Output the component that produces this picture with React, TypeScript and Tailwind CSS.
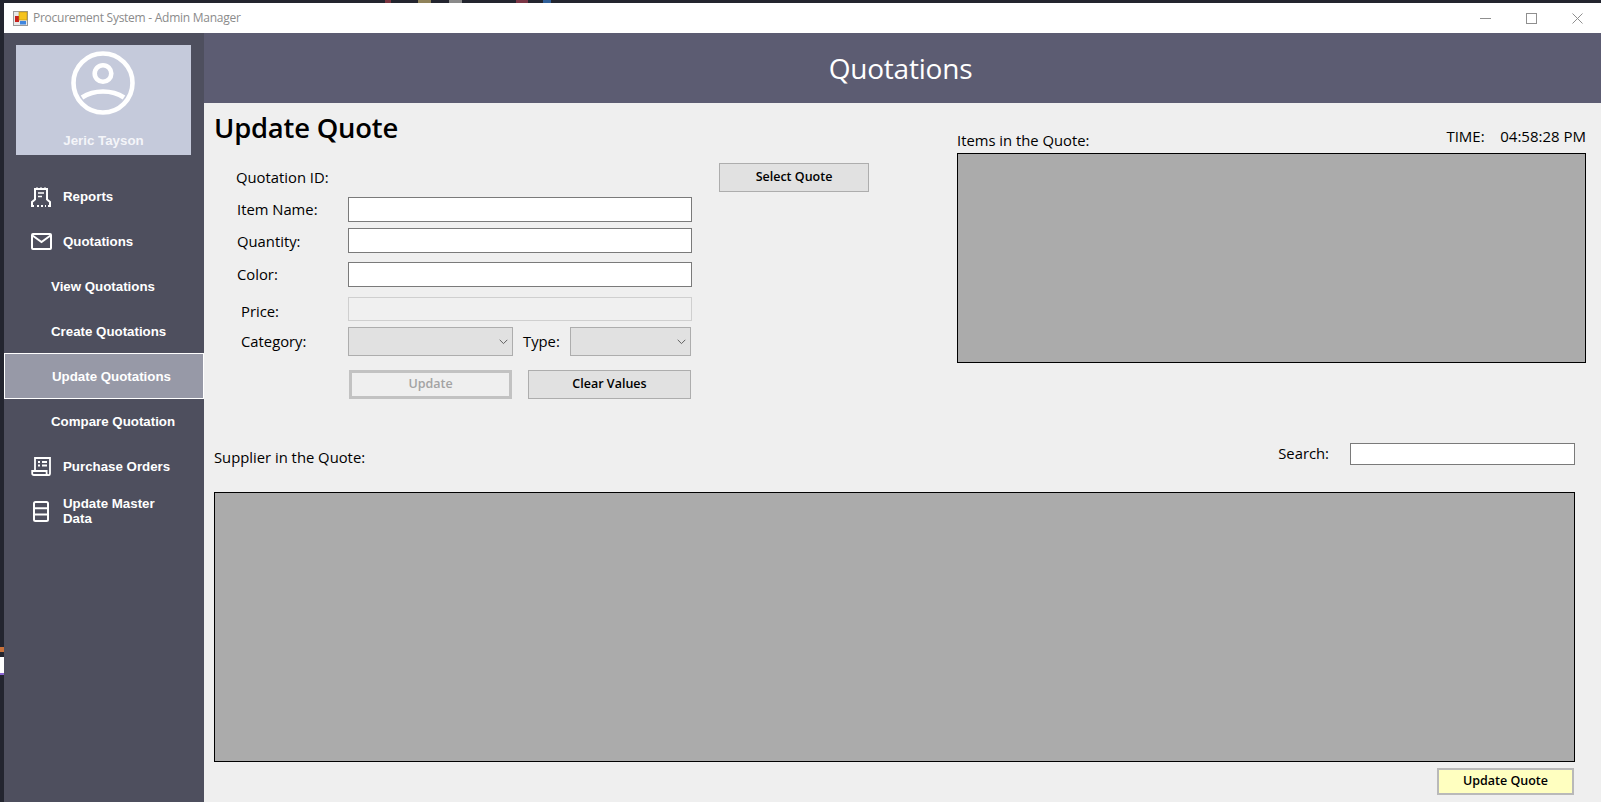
import React from 'react';

const uiFont = "[font-family:'Open_Sans',sans-serif]";

const ReportsIcon = () => (
    <svg width="22" height="20" viewBox="0 0 22 20" fill="none" stroke="#fff" strokeWidth="2">
        <path d="M5 13V2h12v11" />
        <path d="M6 1h2M10 1h2M14 1h2" strokeWidth="1.2" />
        <path d="M8 6h6M8 9.5h4" strokeWidth="1.7" />
        <path d="M5 12.5 2 15v4h2M17 12.5l3 2.5v4h-2" />
        <path d="M7 19h2M11 19h2M15 19h1" />
    </svg>
);

const MailIcon = () => (
    <svg width="21" height="17" viewBox="0 0 21 17" fill="none" stroke="#fff" strokeWidth="2">
        <rect x="1" y="1" width="19" height="15" rx="1" />
        <path d="M1.5 2.5 10.5 9l9-6.5" />
    </svg>
);

const OrdersIcon = () => (
    <svg width="20" height="19" viewBox="0 0 20 19" fill="none" stroke="#fff" strokeWidth="1.8">
        <path d="M4 14V1h15v15.5a1.7 1.7 0 0 1-3.4 0V14H1.2v2.2A1.8 1.8 0 0 0 3 18h13" />
        <path d="M7 5h2M11 5h5M7 8.5h2M11 8.5h5" />
    </svg>
);

const DataIcon = () => (
    <svg width="16" height="21" viewBox="0 0 16 21" fill="none" stroke="#fff" strokeWidth="2">
        <rect x="1" y="1" width="14" height="19" rx="1.5" />
        <path d="M1 7.3h14M1 13.6h14" />
    </svg>
);

const Chevron = () => (
    <svg width="9" height="6" viewBox="0 0 9 6" fill="none" stroke="#606060" strokeWidth="1">
        <path d="M.7.8 4.5 4.6 8.3.8" />
    </svg>
);

const NavItem: React.FC<{ icon?: React.ReactNode; active?: boolean; children: React.ReactNode }> = ({ icon, active, children }) => {
    if (active) {
        return (
            <div className="-mt-px h-[46px] flex items-center pl-[47px] bg-[#9799a7] border border-white text-[13.3px] font-bold text-white leading-[15px]">
                {children}
            </div>
        );
    }
    return (
        <div className={`h-[45px] flex items-center text-[13.3px] font-bold text-white leading-[15px] ${icon ? 'pl-[24px]' : 'pl-[47px]'}`}>
            {icon && <div className="w-[31px] flex justify-center pr-[5px]">{icon}</div>}
            <span className={icon ? 'pl-[4px]' : ''}>{children}</span>
        </div>
    );
};

const TextBox: React.FC<{ className?: string; disabled?: boolean }> = ({ className, disabled }) => (
    <input
        disabled={disabled}
        className={`block h-[25px] bg-white border border-[#7a7a7a] outline-none ${className ?? ''}`}
    />
);

const ComboBox: React.FC<{ className?: string }> = ({ className }) => (
    <div className={`h-[29px] bg-[#e1e1e1] border border-[#adadad] flex items-center justify-end pr-[4px] ${className ?? ''}`}>
        <Chevron />
    </div>
);

const Button: React.FC<{ className?: string; children: React.ReactNode }> = ({ className, children }) => (
    <button className={`block h-[29px] bg-[#e1e1e1] border border-[#adadad] text-[12.5px] font-semibold text-black ${uiFont} ${className ?? ''}`}>
        {children}
    </button>
);

export default function App() {
    return (
        <div className="w-screen h-screen overflow-hidden bg-[#23252f] flex font-['Liberation_Sans',sans-serif]">
            <div className="w-[4px] shrink-0 flex flex-col pt-[647px]">
                <div className="h-[5px] bg-[#c8713a]" />
                <div className="h-[5px]" />
                <div className="h-[16px] bg-white" />
                <div className="h-[2px] bg-[#8a63d2]" />
            </div>
            <div className="flex-1 min-w-0 flex flex-col">
                {/* bits of the desktop behind the window */}
                <div className="h-[3px] shrink-0 flex pl-[381px]">
                    <div className="w-[6px] bg-[#7a3540]" />
                    <div className="w-[27px]" />
                    <div className="w-[13px] bg-[#8f825a]" />
                    <div className="w-[18px]" />
                    <div className="w-[13px] bg-[#8a8a8a]" />
                    <div className="w-[54px]" />
                    <div className="w-[12px] bg-[#7a3545]" />
                    <div className="w-[15px]" />
                    <div className="w-[8px] bg-[#2f5f98]" />
                </div>
                {/* title bar */}
                <div className="h-[30px] shrink-0 bg-white flex items-center">
                    <svg className="ml-[9px]" width="15" height="15" viewBox="0 0 15 15">
                        <rect x="0.5" y="0.5" width="14" height="14" fill="#e8e8e8" stroke="#9a9a9a" />
                        <rect x="2" y="5" width="4" height="6" fill="#c8201c" />
                        <rect x="6" y="1" width="8" height="8" fill="#f5c31d" stroke="#b98c10" strokeWidth="0.6" />
                        <rect x="7" y="10" width="6" height="3.5" fill="#3f86e0" />
                    </svg>
                    <span className={`ml-[5px] text-[12px] text-[#8b8b8b] ${uiFont} tracking-[-0.26px]`}>
                        Procurement System - Admin Manager
                    </span>
                    <div className="ml-auto flex items-center pr-[18px] gap-[35px]">
                        <svg width="11" height="11" viewBox="0 0 11 11" stroke="#8f8f8f"><path d="M0 5.5h11" /></svg>
                        <svg width="11" height="11" viewBox="0 0 11 11" fill="none" stroke="#8f8f8f"><rect x="0.5" y="0.5" width="10" height="10" /></svg>
                        <svg width="11" height="11" viewBox="0 0 11 11" stroke="#8f8f8f"><path d="M.5.5l10 10M10.5.5l-10 10" /></svg>
                    </div>
                </div>

                <div className="flex-1 min-h-0 flex">
                    {/* sidebar */}
                    <aside className="w-[200px] shrink-0 bg-[#4e4f5e] flex flex-col">
                        <div className="mt-[12px] ml-[12px] w-[175px] h-[110px] bg-[#c5cadb] flex flex-col items-center pt-[5px] pr-[2px]">
                            <svg width="66" height="66" viewBox="0 0 66 66" fill="none" stroke="#fff" strokeWidth="4.6">
                                <circle cx="33" cy="33" r="29.5" />
                                <circle cx="33" cy="23.5" r="8.3" />
                                <path d="M12 47.5C18 43.5 25 41.5 33 41.5s15 2 21 6" />
                            </svg>
                            <span className="mt-[17px] pl-[2px] text-[13.3px] font-bold text-[#f4f5f9] leading-[15px]">Jeric Tayson</span>
                        </div>
                        <nav className="mt-[19px] flex flex-col">
                            <NavItem icon={<ReportsIcon />}>Reports</NavItem>
                            <NavItem icon={<MailIcon />}>Quotations</NavItem>
                            <NavItem>View Quotations</NavItem>
                            <NavItem>Create Quotations</NavItem>
                            <NavItem active>Update Quotations</NavItem>
                            <NavItem>Compare Quotation</NavItem>
                            <NavItem icon={<OrdersIcon />}>Purchase Orders</NavItem>
                            <NavItem icon={<DataIcon />}>
                                <span className="block w-[110px] pb-[2px]">Update Master Data</span>
                            </NavItem>
                        </nav>
                    </aside>

                    <div className={`flex-1 min-w-0 flex flex-col bg-[#efefef] text-black ${uiFont}`}>
                        <header className="h-[70px] shrink-0 bg-[#5c5c72] flex items-center justify-center text-white text-[28px] font-medium tracking-[-0.2px] pr-[4px]">
                            Quotations
                        </header>

                        <main className="flex-1 min-h-0 flex flex-col pl-[10px]">
                            <div className="flex">
                                {/* quote form */}
                                <div className="w-[743px] shrink-0">
                                    <h1 className="h-[60px] pt-[7px] text-[27.4px] leading-[36px] font-semibold tracking-[-0.2px]">Update Quote</h1>
                                    <div className="flex items-center h-[29px] text-[14.8px]">
                                        <span className="ml-[22px]">Quotation ID:</span>
                                        <Button className="ml-auto mr-[88px] w-[150px]">Select Quote</Button>
                                    </div>
                                    <div className="mt-[5px] h-[25px] flex items-center text-[14.8px]">
                                        <span className="ml-[23px] w-[111px] pb-[1px]">Item Name:</span>
                                        <TextBox className="w-[344px]" />
                                    </div>
                                    <div className="mt-[6px] h-[25px] flex items-center text-[14.8px]">
                                        <span className="ml-[23px] w-[111px] pt-[2px]">Quantity:</span>
                                        <TextBox className="w-[344px]" />
                                    </div>
                                    <div className="mt-[9px] h-[25px] flex items-center text-[14.8px]">
                                        <span className="ml-[23px] w-[111px]">Color:</span>
                                        <TextBox className="w-[344px]" />
                                    </div>
                                    <div className="mt-[10px] h-[24px] flex items-center text-[14.8px]">
                                        <span className="ml-[27px] w-[107px] pt-[4px]">Price:</span>
                                        <TextBox disabled className="w-[344px] !h-[24px] !bg-[#f0f0f0] !border-[#cfcfcf]" />
                                    </div>
                                    <div className="mt-[6px] h-[29px] flex items-center text-[14.8px]">
                                        <span className="ml-[27px] w-[107px]">Category:</span>
                                        <ComboBox className="w-[165px]" />
                                        <span className="ml-[10px] w-[47px]">Type:</span>
                                        <ComboBox className="w-[121px]" />
                                    </div>
                                    <div className="mt-[14px] flex pl-[135px]">
                                        <button className="block w-[163px] h-[29px] bg-[#efefef] border-[3px] border-[#c2c2c2] text-[12.5px] font-semibold text-[#a3a3a3]">Update</button>
                                        <Button className="ml-[16px] w-[163px]">Clear Values</Button>
                                    </div>
                                </div>

                                {/* items panel */}
                                <div className="w-[629px] shrink-0">
                                    <div className="h-[50px] flex items-end justify-between text-[14.8px]">
                                        <span className="leading-[20px] pb-[3px]">Items in the Quote:</span>
                                        <span className="leading-[20px] pb-[7px] whitespace-pre text-[15px]">TIME:{'    '}04:58:28 PM</span>
                                    </div>
                                    <div className="h-[210px] bg-[#ababab] border border-black" />
                                </div>
                            </div>

                            {/* supplier section */}
                            <div className="mt-[44px] w-[1361px] h-[22px] flex items-center justify-between text-[14.8px]">
                                <span className="pt-[6px]">Supplier in the Quote:</span>
                                <div className="flex items-center">
                                    <span className="pb-[1px]">Search:</span>
                                    <TextBox className="ml-[21px] w-[225px] !h-[22px]" />
                                </div>
                            </div>
                            <div className="mt-[27px] w-[1361px] h-[270px] bg-[#ababab] border border-black" />
                            <div className="mt-[6px] w-[1361px] flex justify-end">
                                <button className="mr-px w-[137px] h-[27px] bg-[#ffffc0] border-[2px] border-[#b9b9b9] text-[12.5px] font-semibold text-black">
                                    Update Quote
                                </button>
                            </div>
                        </main>
                    </div>
                </div>
            </div>
        </div>
    );
}
